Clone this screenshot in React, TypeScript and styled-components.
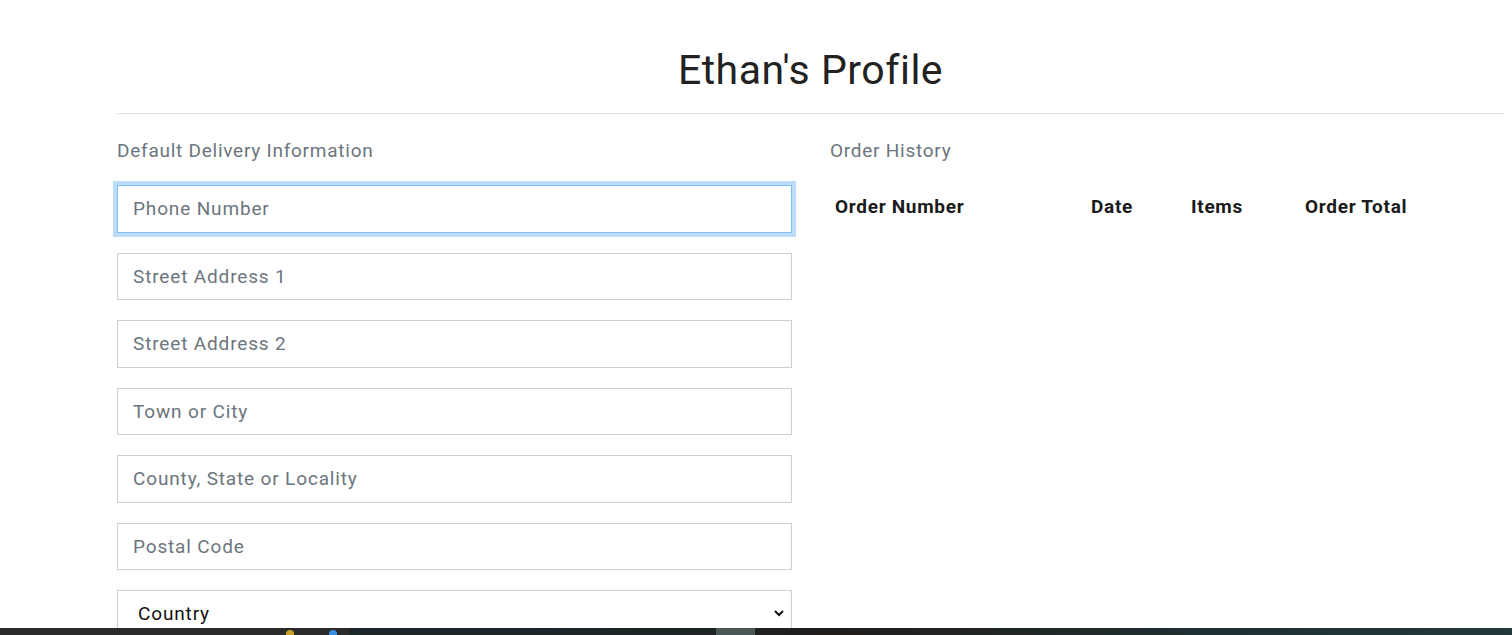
import React from "react";
import styled, { createGlobalStyle } from "styled-components";

const Global = createGlobalStyle`
  html, body { margin: 0; padding: 0; background: #fff; }
  body { font-family: Roboto, "Liberation Sans", sans-serif; color: #222; }
  * { box-sizing: border-box; }
`;

const Page = styled.div`
  width: 1512px;
  height: 635px;
  overflow: hidden;
`;

const Container = styled.div`
  margin-left: 117px;
  width: 1387px;
`;

const Title = styled.h1`
  margin: 0;
  padding-top: 46px;
  font-size: 41px;
  line-height: 48px;
  font-weight: 400;
  letter-spacing: 0.5px;
  text-align: center;
  color: #222;
`;

const Rule = styled.hr`
  margin: 19px 0 0 0;
  border: 0;
  border-top: 1px solid #e1e1e1;
`;

const Row = styled.div`
  display: grid;
  grid-template-columns: 675px 1fr;
  column-gap: 38px;
  padding-top: 25px;
`;

const SectionLabel = styled.p`
  margin: 0 0 22px 0;
  font-size: 19px;
  line-height: 24px;
  letter-spacing: 0.75px;
  color: #6c757d;
`;

const Field = styled.input<{ $focused?: boolean }>`
  display: block;
  width: 100%;
  height: 47.5px;
  margin-bottom: 20px;
  padding: 0 15px;
  font-family: inherit;
  font-size: 19px;
  letter-spacing: 0.85px;
  color: #333;
  background: #fff;
  border: 1px solid ${(p) => (p.$focused ? "#80bdff" : "#cfcfcf")};
  border-radius: 0;
  outline: none;
  box-shadow: ${(p) => (p.$focused ? "0 0 0 4px #bcdcfa" : "none")};
  &::placeholder { color: #6c757d; }
`;

const SelectWrap = styled.div`
  position: relative;
  width: 100%;
`;

const Select = styled.select`
  display: block;
  width: 100%;
  height: 47.5px;
  padding: 0 15px 0 20px;
  font-family: inherit;
  font-size: 19px;
  letter-spacing: 0.85px;
  color: #111;
  background: #fff;
  border: 1px solid #cfcfcf;
  border-radius: 0;
  appearance: none;
  outline: none;
`;

const Chevron = styled.svg`
  position: absolute;
  right: 7px;
  top: 18px;
  pointer-events: none;
`;

const Table = styled.table`
  border-collapse: collapse;
  margin-top: 32px;
`;

const Th = styled.th<{ $w: number }>`
  width: ${(p) => p.$w}px;
  padding: 0 5px;
  text-align: left;
  font-size: 19px;
  line-height: 24px;
  font-weight: 700;
  letter-spacing: 0.7px;
  color: #1a1a1a;
`;

const Taskbar = styled.div`
  position: fixed;
  left: 0;
  right: 0;
  bottom: 0;
  height: 7px;
  display: flex;
  background: linear-gradient(90deg, #1b2a2e 0%, #1d2426 45%, #211d1b 55%, #1f3336 85%, #22393b 100%);
`;

const TaskStart = styled.div`
  width: 350px;
  background: #2b2b2b;
  position: relative;
`;

const TaskDot = styled.span<{ $x: number; $c: string }>`
  position: absolute;
  left: ${(p) => p.$x}px;
  top: 2px;
  width: 8px;
  height: 5px;
  border-radius: 4px 4px 0 0;
  background: ${(p) => p.$c};
`;

const TaskGap = styled.div<{ $w: number }>`
  width: ${(p) => p.$w}px;
`;

const TaskActive = styled.div`
  width: 39px;
  background: #4c5757;
`;

const fields = [
  "Street Address 1",
  "Street Address 2",
  "Town or City",
  "County, State or Locality",
  "Postal Code",
];

export default function App() {
  return (
    <Page>
      <Global />
      <Container>
        <Title>Ethan's Profile</Title>
        <Rule />
        <Row>
          <div>
            <SectionLabel>Default Delivery Information</SectionLabel>
            <Field $focused placeholder="Phone Number" autoFocus />
            {fields.map((f) => (
              <Field key={f} placeholder={f} />
            ))}
            <SelectWrap>
              <Select defaultValue="">
                <option value="">Country</option>
              </Select>
              <Chevron width="12" height="10" viewBox="0 0 12 10">
                <path d="M2 3 L6 7 L10 3" fill="none" stroke="#111" strokeWidth="2" />
              </Chevron>
            </SelectWrap>
          </div>
          <div>
            <SectionLabel>Order History</SectionLabel>
            <Table>
              <thead>
                <tr>
                  <Th $w={256}>Order Number</Th>
                  <Th $w={100}>Date</Th>
                  <Th $w={114}>Items</Th>
                  <Th $w={140}>Order Total</Th>
                </tr>
              </thead>
            </Table>
          </div>
        </Row>
      </Container>
      <Taskbar>
        <TaskStart>
          <TaskDot $x={286} $c="#c9a227" />
          <TaskDot $x={329} $c="#3a8ee6" />
        </TaskStart>
        <TaskGap $w={366} />
        <TaskActive />
      </Taskbar>
    </Page>
  );
}
